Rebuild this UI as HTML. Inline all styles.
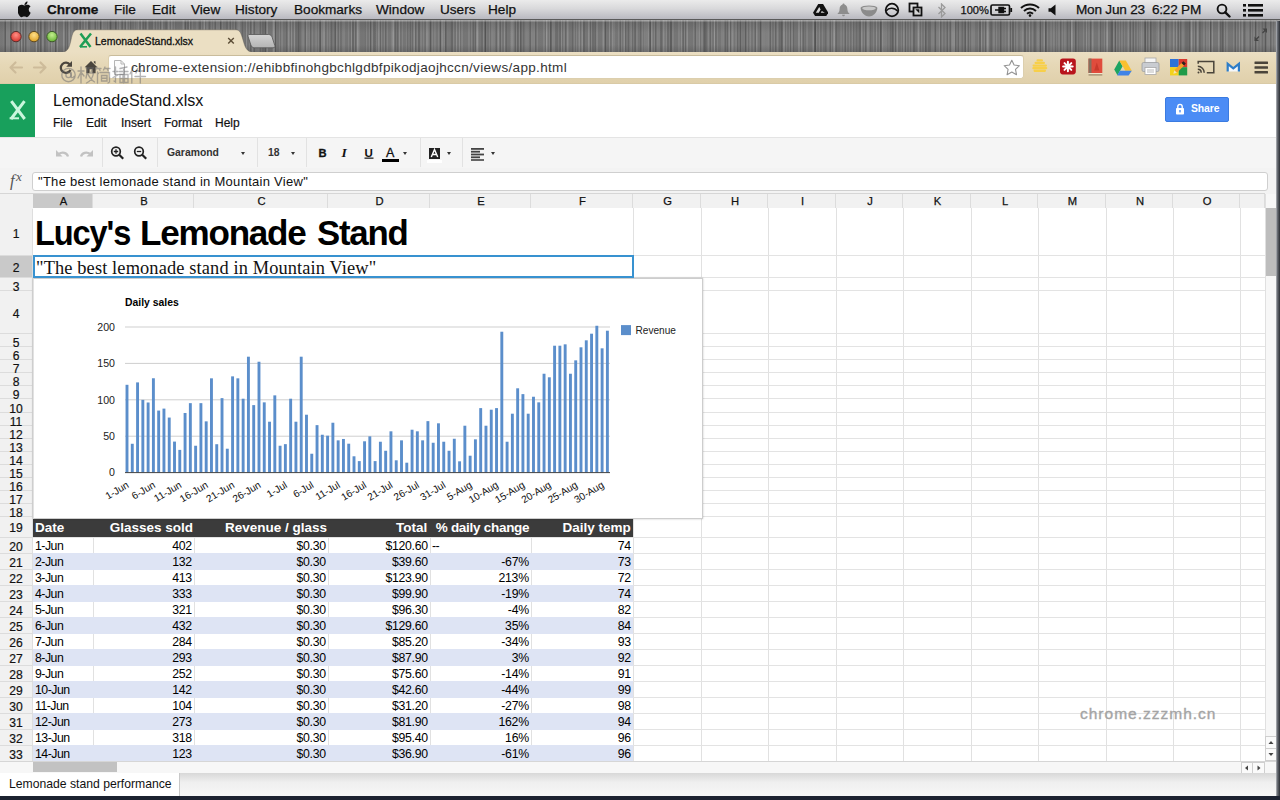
<!DOCTYPE html>
<html><head><meta charset="utf-8"><title>LemonadeStand.xlsx</title>
<style>
html,body{margin:0;padding:0}
body{width:1280px;height:800px;overflow:hidden;position:relative;background:#fff;font-family:"Liberation Sans",sans-serif;color:#000}
div,span,svg{position:absolute;box-sizing:border-box}
.tc span{position:static}
/* ---- mac menubar ---- */
#menubar{left:0;top:0;width:1280px;height:20px;background:linear-gradient(#ebebeb 0%,#d9d9db 45%,#b9b9c0 100%);border-bottom:1px solid #5a5a5a}
#menubar .m{top:0;height:20px;line-height:20px;font-size:13.6px;color:#111;white-space:nowrap;-webkit-text-stroke:0.25px #111}
#menubar .m.b{font-weight:bold}
/* ---- chrome frame ---- */
#frame{left:0;top:20px;width:1280px;height:33px;background:
repeating-linear-gradient(90deg,rgba(255,255,255,.10) 0,rgba(255,255,255,.10) 1px,transparent 1px,transparent 3px),
repeating-linear-gradient(90deg,rgba(0,0,0,.13) 0,rgba(0,0,0,.13) 1px,transparent 1px,transparent 5px),
repeating-linear-gradient(90deg,rgba(255,255,255,.09) 0,rgba(255,255,255,.09) 2px,transparent 2px,transparent 7px),
repeating-linear-gradient(90deg,rgba(0,0,0,.12) 0,rgba(0,0,0,.12) 2px,transparent 2px,transparent 11px),
repeating-linear-gradient(90deg,rgba(255,255,255,.08) 0,rgba(255,255,255,.08) 3px,transparent 3px,transparent 17px),
repeating-linear-gradient(90deg,rgba(0,0,0,.08) 0,rgba(0,0,0,.08) 6px,transparent 6px,transparent 37px),
#757575}
#frameshade{left:0;top:20px;width:1280px;height:33px;background:linear-gradient(rgba(200,200,200,.5) 0,rgba(200,200,200,.5) 1px,rgba(60,60,60,.22) 2px,rgba(120,120,120,.0) 40%,rgba(120,120,120,.0) 75%,rgba(60,60,60,.3))}
#ctoolbar{left:0;top:52px;width:1280px;height:32px;background:linear-gradient(#ebdfc3,#e6d8b7 40%,#e0d0ab);border-bottom:1px solid #d9caa6}
#omni{left:108px;top:55px;width:916px;height:24px;background:#fff;border:1px solid #dccfae;border-top-color:#c9bc9c;border-radius:3px}
#url{left:131px;top:57px;height:21px;line-height:21px;font-size:13.5px;color:#333;white-space:nowrap;letter-spacing:0.33px}
#tabtxt{left:95px;top:33px;height:16px;line-height:16px;font-size:10.5px;color:#111;white-space:nowrap;-webkit-text-stroke:0.3px #111}
/* ---- app ---- */
#logo{left:0;top:84px;width:35px;height:53px;background:#18a05c}
#doctitle{left:53px;top:90px;height:20px;line-height:20px;font-size:16.1px;color:#111;white-space:nowrap}
.am{top:115px;height:16px;line-height:16px;font-size:12px;color:#111;white-space:nowrap;-webkit-text-stroke:0.2px #111}
#share{left:1165px;top:97px;width:64px;height:25px;background:#4b8cf5;border:1px solid #3b7be0;border-radius:2px}
#share span{left:25px;top:0;height:22px;line-height:22px;font-size:10.4px;font-weight:bold;color:#fff;letter-spacing:-0.1px}
#atool{left:0;top:137px;width:1280px;height:32px;background:#f5f5f5;border-top:1px solid #e4e4e4;border-bottom:1px solid #ececec}
.sep{top:138px;width:1px;height:29px;background:#e2e2e2}
.tt{top:145px;height:16px;line-height:16px;font-size:10.4px;font-weight:bold;color:#333;white-space:nowrap}
.car{width:0;height:0;border-left:2.6px solid transparent;border-right:2.6px solid transparent;border-top:3px solid #333;top:152px;margin-left:0.5px}
#fbar{left:0;top:168px;width:1280px;height:26px;background:#f3f3f3}
#fx{left:10px;top:167.5px;font-family:"Liberation Serif",serif;font-style:italic;font-size:16.5px;color:#555;line-height:18px;height:18px;white-space:nowrap}
#finput{left:32px;top:172px;width:1236px;height:19px;background:#fff;border:1px solid #cfcfcf;border-radius:3px}
#ftext{left:38px;top:173px;height:17px;line-height:17px;font-size:13px;color:#111;white-space:nowrap;letter-spacing:0.28px}
/* ---- grid ---- */
#colhdr{left:0;top:193px;width:1265px;height:15px;background:#f1f1f1;border-top:1px solid #d6d6d6}
.ch{top:0;height:14px;line-height:14px;font-size:11.2px;text-align:center;color:#111;padding-left:2px;-webkit-text-stroke:0.25px #111;border-right:1px solid #dcdcdc}
.ch.sel{background:#c9c9c9}
#rowhdr{left:0;top:0;width:33px;height:761px}#rowbg{left:0;top:208px;width:33px;height:553px;background:#f1f1f1}
.rh{left:0;width:33px;font-size:12.1px;text-align:center;color:#111;border-bottom:1px solid #dcdcdc;border-right:1px solid #dedede;-webkit-text-stroke:0.2px #111}
.rh.sel{background:#c9c9c9}
#corner{left:0;top:193px;width:33px;height:15px;background:#f1f1f1;border:1px solid #d6d6d6;border-left:0}
.vl{top:208px;width:1px;height:553px;background:#e1e1e1}
.hl{left:33px;width:1232px;height:1px;background:#e3e3e3}
#r1mask{left:33px;top:208px;width:600px;height:47px;background:#fff}
.r1{top:208px;height:48px;line-height:49px;font-size:34.8px;font-weight:bold;white-space:nowrap;color:#000;letter-spacing:-1.22px;transform-origin:0 50%}#r1a{transform:scaleX(0.937)}#r1b{transform:scaleX(1.008)}
#r2{left:33px;top:255px;width:601px;height:23px;background:#fff;border:2px solid #3892d0}
#r2t{left:36px;top:257px;height:22px;line-height:22px;font-family:"Liberation Serif",serif;font-size:18.4px;white-space:nowrap;color:#111;letter-spacing:0.12px}
/* ---- table ---- */
.thr{left:33px;width:600px;background:#3b3b3b}
.thr .tc{top:0;height:18px;line-height:18px;font-size:13.5px;font-weight:bold;color:#fff;letter-spacing:0}.thr .tc.r{padding-right:1px}
.tr{left:33px;width:600px;height:16px}
.tr.b{background:#dee4f4;height:17px}
.tr .tc{top:0;height:16px;line-height:18px;font-size:12.3px;color:#000;letter-spacing:-0.3px}.tr .tc.l{letter-spacing:-0.5px}
.tc{white-space:nowrap;overflow:visible}
.tc.l{text-align:left;padding-left:2px}
.tc.r{text-align:right;padding-right:2.2px}
#tbl .tc{margin-left:-33px}
/* ---- chart ---- */
#chart{left:33px;top:278px;width:670px;height:241px;background:#fff;border:1px solid #cdcdcd;border-left-color:#e2e2e2;box-shadow:0 0 2px rgba(0,0,0,.22)}
/* ---- footer ---- */
#hscroll{left:0;top:761px;width:1280px;height:12px;background:#f7f7f7;border-top:1px solid #d6d6d6}
#hthumb{left:33px;top:762px;width:84px;height:10px;background:#c2c2c2}
#vscroll{left:1265px;top:194px;width:12px;height:568px;background:#f7f7f7;border-left:1px solid #e0e0e0}
#vthumb{left:1266px;top:208px;width:10px;height:68px;background:#bdbdbd}
#tabbar{left:0;top:773px;width:1280px;height:23px;background:linear-gradient(#d8d8d8,#efefef 40%,#f6f6f6)}
#sheettab{left:0;top:773px;width:180px;height:23px;background:#fff;border-right:1px solid #c8c8c8;font-size:12.2px;line-height:22px;padding-left:9px;color:#111;white-space:nowrap}
#bottom{left:0;top:796px;width:1280px;height:4px;background:#1c2230}
#rightedge{left:1276px;top:21px;width:4px;height:779px;background:linear-gradient(90deg,#b9bbc0 0,#6a6e75 35%,#2a2d33 100%)}
#wm{left:1080px;top:704px;font-size:15.5px;line-height:20px;color:#a4a4a4;-webkit-text-stroke:0.35px #a4a4a4;letter-spacing:1px;white-space:nowrap}
#wm2{left:60px;top:62px;font-size:15px;line-height:20px;color:rgba(120,110,95,.55);white-space:nowrap}

</style></head><body>
<!-- mac menubar -->
<div id="menubar">
<svg style="left:17.600px;top:1px" width="14" height="16.800" viewBox="0 0 15 18"><path d="M10.2 0.6c0.1 1-0.3 1.9-0.9 2.6C8.7 3.9 7.8 4.4 6.9 4.3 6.8 3.4 7.2 2.4 7.8 1.8 8.4 1.1 9.4 0.6 10.2 0.6zM13.6 12.6c-0.4 1-0.6 1.400-1.100 2.200-0.700 1.100-1.700 2.500-2.900 2.500-1.100 0-1.400-0.700-2.900-0.700-1.500 0-1.800 0.700-2.900 0.700C2.600 17.300 1.700 16 1 14.900-1 11.800-1.200 8.200 0 6.300 0.900 4.900 2.300 4.100 3.600 4.100c1.300 0 2.200 0.700 3.300 0.700 1.100 0 1.700-0.700 3.300-0.700 1.200 0 2.400 0.600 3.300 1.700-2.900 1.600-2.400 5.700 0.100 6.800z" fill="#111"/></svg>
<div class="m b" style="left:47px">Chrome</div>
<div class="m" style="left:114px">File</div>
<div class="m" style="left:152px">Edit</div>
<div class="m" style="left:191px">View</div>
<div class="m" style="left:235px">History</div>
<div class="m" style="left:294px">Bookmarks</div>
<div class="m" style="left:376px">Window</div>
<div class="m" style="left:440px">Users</div>
<div class="m" style="left:488px">Help</div>
<!-- right status icons -->
<svg style="left:813px;top:3.5px" width="15.3" height="12.6" viewBox="0 0 17 14"><path d="M5.800 0h5.400l5.800 9.800-2.700 4.200H2.700L0 9.800z" fill="#111"/><path d="M6.900 3.200l-3.800 6.600h3.300l2.100-3.700zM9.800 7.800l-1.200 2h4.600z" fill="#d8d8d8"/></svg>
<svg style="left:837px;top:3px" width="13" height="14" viewBox="0 0 13 14"><path d="M6.500 0.500c0.600 0 1 0.400 1 0.900 2 0.600 2.900 2.300 2.900 4.500 0 2.400 0.700 3.500 1.900 4.400v0.700H0.700v-0.700c1.200-0.900 1.900-2 1.900-4.400 0-2.200 0.900-3.900 2.900-4.500 0-0.500 0.400-0.900 1-0.900zM5 11.800h3c0 0.900-0.700 1.500-1.500 1.500S5 12.700 5 11.800z" fill="#8d8d8d"/></svg>
<svg style="left:860px;top:5px" width="18" height="12" viewBox="0 0 18 12"><path d="M0.600 2.800C1.500 1.200 5 0.400 9 0.400s7.500 0.800 8.400 2.400c-0.300 4.600-3.700 8.600-8.400 8.600S0.900 7.400 0.600 2.800z" fill="#8b8b8b"/><ellipse cx="9" cy="3.300" rx="6.800" ry="1.900" fill="#c9c9c9"/></svg>
<svg style="left:884px;top:2px" width="16" height="16" viewBox="0 0 16 16"><circle cx="8" cy="8" r="6.300" fill="none" stroke="#111" stroke-width="1.800"/><path d="M2.300 8.800c2.200-3.200 8-3.800 11.200 0.300" fill="none" stroke="#111" stroke-width="1.500"/></svg>
<svg style="left:908px;top:2px" width="15" height="15" viewBox="0 0 15 15"><rect x="1.500" y="1.500" width="8" height="8" fill="none" stroke="#111" stroke-width="1.800"/><rect x="5.500" y="5.500" width="8" height="8" fill="#d5d5d5" stroke="#111" stroke-width="1.800"/><path d="M7.300 7.300h4v4z" fill="#111"/></svg>
<svg style="left:937px;top:3px" width="10" height="15" viewBox="0 0 10 15"><path d="M1.500 4l6.500 6.500-3.500 3.500V1L8 4.500 1.500 11" fill="none" stroke="#9a9a9a" stroke-width="1.300"/></svg>
<div class="m" style="left:960.5px;font-size:11.1px">100%</div>
<svg style="left:990px;top:4px" width="23" height="12" viewBox="0 0 23 12"><rect x="1" y="1" width="18.500" height="10" rx="1.500" fill="none" stroke="#111" stroke-width="1.700"/><rect x="20.300" y="4" width="1.800" height="4" fill="#111"/><path d="M5 6h4M9 3.500h4.500v5H9zM13.500 4.500h2.500M13.500 7.500h2.500" stroke="#111" stroke-width="1.400" fill="#111"/></svg>
<svg style="left:1020px;top:3px" width="20" height="14" viewBox="0 0 20 14"><g fill="none" stroke="#111" stroke-width="2"><path d="M1 5C6 0.300 14 0.300 19 5"/><path d="M4 8c3.500-3.200 8.500-3.200 12 0"/><path d="M7 10.800c1.800-1.600 4.200-1.600 6 0"/></g><circle cx="10" cy="12.600" r="1.300" fill="#111"/></svg>
<svg style="left:1048px;top:4px" width="9" height="12" viewBox="0 0 9 12"><path d="M0.500 4.200h2.300L7.500 0.500v11L2.800 7.800H0.500z" fill="#111"/></svg>
<div class="m" style="left:1076px;letter-spacing:-0.22px">Mon Jun 23&nbsp; 6:22 PM</div>
<svg style="left:1216px;top:3px" width="15" height="15" viewBox="0 0 15 15"><circle cx="6" cy="6" r="4.400" fill="none" stroke="#111" stroke-width="1.900"/><path d="M9.300 9.300l4.200 4.200" stroke="#111" stroke-width="2.400" stroke-linecap="round"/></svg>
<svg style="left:1243px;top:4px" width="20" height="13" viewBox="0 0 20 13"><g fill="#111"><rect x="0" y="0" width="3" height="2.600"/><rect x="0" y="5" width="3" height="2.600"/><rect x="0" y="10" width="3" height="2.600"/><rect x="5" y="0" width="15" height="2.600"/><rect x="5" y="5" width="15" height="2.600"/><rect x="5" y="10" width="15" height="2.600"/></g></svg>
</div>
<!-- window frame -->
<div id="frame"></div><div id="frameshade"></div>
<svg style="left:0;top:20px" width="1280" height="34" viewBox="0 0 1280 34">
<defs>
<radialGradient id="gr" cx="50%" cy="35%" r="60%"><stop offset="0" stop-color="#ff8f86"/><stop offset="1" stop-color="#d93a33"/></radialGradient>
<radialGradient id="gy" cx="50%" cy="35%" r="60%"><stop offset="0" stop-color="#ffe08a"/><stop offset="1" stop-color="#e0a52a"/></radialGradient>
<radialGradient id="gg" cx="50%" cy="35%" r="60%"><stop offset="0" stop-color="#c4ee8f"/><stop offset="1" stop-color="#6cb83a"/></radialGradient>
<linearGradient id="gnt" x1="0" y1="0" x2="0" y2="1"><stop offset="0" stop-color="#d4d4d4"/><stop offset="1" stop-color="#b4b4b4"/></linearGradient>
</defs>
<circle cx="16" cy="16.600" r="5.200" fill="url(#gr)" stroke="#5a2f2d" stroke-width="1"/>
<circle cx="34" cy="16.600" r="5.200" fill="url(#gy)" stroke="#5f4a22" stroke-width="1"/>
<circle cx="52" cy="16.600" r="5.200" fill="url(#gg)" stroke="#3d5a2a" stroke-width="1"/>
<path d="M0 34V32H63C68 31.500 69.500 27 71 20 72.500 13 73.500 9.800 78 9.800H235.500C240 9.800 241 13 243 20 245 27 246.500 31.500 252 32H1280V34H0z" fill="#ebdfc3"/>
<path d="M63 32C68 31.500 69.500 27 71 20 72.500 13 73.500 9.800 78 9.800H235.500C240 9.800 241 13 243 20 245 27 246.500 31.500 252 32" fill="none" stroke="#5f5a52" stroke-width="0.900" opacity="0.450"/>
<path d="M249 14.500h19.500c2 0 3 1 3.700 3l2.600 8c0.500 1.500-0.200 2.300-1.800 2.300H254.500c-2 0-3-1-3.700-3l-2.600-8c-0.500-1.500 0.200-2.300 0.800-2.300z" fill="url(#gnt)" stroke="#555" stroke-width="0.800"/>
<!-- favicon X -->
<g stroke="#1e9e55" stroke-width="2.500" fill="none" stroke-linecap="butt"><path d="M80.500 13.500l10 13.500M91 13.500L80 27"/><path d="M80 26.800h7" stroke-width="1.600"/></g>
<!-- tab close -->
<path d="M228.200 17.900l5.600 5.600M233.800 17.900l-5.600 5.600" stroke="#5b4d36" stroke-width="1.400"/>
<!-- fullscreen arrows -->
<g stroke="#454545" stroke-width="1.300" fill="#454545"><path d="M1266 9.500l-3.500 3.500M1259 16.500l-3.500 3.500" fill="none"/><path d="M1267 8.500v4.500l-4.500-4.500zM1254.500 21v-4.500l4.500 4.500z" stroke="none"/></g>
</svg>
<div id="tabtxt">LemonadeStand.xlsx</div>
<div id="ctoolbar"></div>
<div id="omni"></div>
<svg style="left:0;top:52px" width="1280" height="31" viewBox="0 0 1280 31">
<!-- back / forward (disabled) -->
<g stroke="#cdbb9a" stroke-width="2.200" fill="none" stroke-linecap="round" stroke-linejoin="round"><path d="M22 15.500H10.500M15.500 10.500l-5 5 5 5"/><path d="M34 15.500h11.500M40.500 10.500l5 5-5 5"/></g>
<!-- reload -->
<g stroke="#4b463e" stroke-width="2.300" fill="none"><path d="M70 12.700A5.100 5.100 0 1 0 70.500 18"/></g><path d="M72 9v5.800h-5.800z" fill="#4b463e"/>
<!-- home -->
<path d="M91 9l6.300 6.200h-1.700v6h-3.200v-4h-2.800v4h-3.200v-6h-1.700zM93.800 9.300h1.700v3l-1.700-1.700z" fill="#4b463e"/>
<!-- page icon -->
<path d="M114.500 8.500h6.500l3.500 3.500v10.500h-10z" fill="#fbfbfb" stroke="#b5b5b5" stroke-width="1"/><path d="M121 8.500v3.500h3.500" fill="none" stroke="#b5b5b5" stroke-width="1"/>
<!-- star -->
<path d="M1011.800 8.200l2.300 4.800 5.300 0.700-3.900 3.700 1 5.300-4.700-2.600-4.700 2.600 1-5.300-3.900-3.700 5.300-0.700z" fill="#fff" stroke="#939393" stroke-width="1.100" stroke-linejoin="round"/>
<!-- ext: yellow -->
<g fill="#f7cf4a"><rect x="1036.500" y="7.200" width="6.500" height="2.300" rx="1.100"/><rect x="1034.500" y="9.800" width="10.500" height="2.300" rx="1.100"/><rect x="1032.500" y="12.400" width="14.500" height="2.300" rx="1.100"/><rect x="1032.300" y="15" width="15" height="2.300" rx="1.100"/><rect x="1033.500" y="17.600" width="12.500" height="2.300" rx="1.100"/></g>
<!-- ext: red asterisk -->
<rect x="1060" y="6.600" width="15.800" height="15.800" rx="2.800" fill="#b8141c"/><g stroke="#fff" stroke-width="2" stroke-linecap="round"><path d="M1067.900 9.700v9.600M1063.100 14.500h9.600M1064.500 11.100l6.800 6.800M1071.300 11.100l-6.800 6.800"/></g>
<!-- ext: red book -->
<path d="M1088.500 6.600h13.800v14.500h-13.800z" fill="#e04c3c"/><path d="M1088.500 6.600h3v14.500h-3z" fill="#86705e"/><path d="M1096.800 10.500l2.600 8h-5.200z" fill="#c93a2c"/><path d="M1088.500 21.100h13.800v1.300h-13.800z" fill="#f3ead0"/><path d="M1088.500 22.300h13.800v1.200h-13.800z" fill="#9a8466"/>
<!-- ext: drive -->
<path d="M1119.300 8.500l3.300 5.700-5.100 9.100-3.300-5.700z" fill="#1da462"/><path d="M1119.300 8.500h6.500l6 10.300h-6.500z" fill="#fbc02f"/><path d="M1119.900 18.800h11.900l-3.200 4.700h-11.400z" fill="#3f83e6"/>
<!-- ext: printer -->
<g><rect x="1145" y="6" width="11" height="6" fill="#f6f6f6" stroke="#a8a8a8" stroke-width="0.800"/><rect x="1142" y="10.500" width="17" height="9" rx="1.500" fill="#c9ccd1" stroke="#9a9da0" stroke-width="0.800"/><rect x="1145" y="15.500" width="11" height="7" fill="#fff" stroke="#a8a8a8" stroke-width="0.800"/><path d="M1147 18h7M1147 20h7" stroke="#a8a8a8" stroke-width="0.800"/></g>
<!-- ext: colorful -->
<g><rect x="1170" y="7" width="8.700" height="8.200" fill="#2d72d8"/><rect x="1178.700" y="7" width="8.500" height="8.200" fill="#d8392e"/><rect x="1170" y="15.200" width="8.700" height="8.200" fill="#f3d21c"/><rect x="1178.700" y="15.200" width="8.500" height="8.200" fill="#209b49"/><path d="M1174.300 18.300l7.200-7.400 2.600 2.500-7.200 7.400z" fill="#f2a32a"/><path d="M1181.500 10.900l1.900-1.700 2.400 2.400-1.700 1.800z" fill="#2a2320"/><path d="M1174.300 18.300l-1 3.500 3.600-1z" fill="#f7e3b0"/></g>
<!-- ext: cast -->
<g fill="none" stroke="#4a443a" stroke-width="1.500"><path d="M1198.200 11.800v-2.300h15.600v11.200h-7"/><path d="M1197.800 14.300c3.800 0 6.400 2.800 6.400 6.400M1197.800 17.300c2 0 3.400 1.500 3.400 3.400"/></g><circle cx="1198.500" cy="20.400" r="1" fill="#4a443a"/>
<!-- ext: M -->
<path d="M1227.700 19.500v-7.700l5.600 4.600 5.600-4.600v7.700" fill="#f4f7fa" stroke="#2d7dc8" stroke-width="2.200" stroke-linejoin="miter"/>
<!-- hamburger -->
<g fill="#4a443a"><rect x="1254.500" y="9.500" width="13.500" height="2.600" rx="0.500"/><rect x="1254.500" y="14.200" width="13.500" height="2.600" rx="0.500"/><rect x="1254.500" y="18.900" width="13.500" height="2.600" rx="0.500"/></g>
</svg>
<svg style="left:58px;top:62px" width="90" height="24" viewBox="0 0 90 24"><g fill="none" stroke="rgba(105,105,110,0.5)" stroke-width="1.35" stroke-linecap="round">
<circle cx="10.500" cy="13" r="6.700"/><circle cx="10.500" cy="13" r="2.600"/><path d="M13.100 10.400v4.200c0 1.500 2.300 1.500 3-0.300"/>
<path d="M20 9h6M23 5v16M23 10l-3 6M23 10l3 4M28 6h7l-2.500 5h3c-0.500 4-3 8-7 10M29.500 11c1.500 4 4 7 7 9M30 6l-2 10"/>
<path d="M39 5l-1.500 3M39 6.500h4M41 6.500l1 2M47 5l-1.500 3M47 6.500h5M49 6.500l1 2M39.500 10v11M39.500 10l1 1.500M42 10.500h9.500v9.500l-1.500 1M43.500 13.500h5.500v5.500h-5.500zM43.500 16.200h5.500"/>
<path d="M55 9.500h5M57.500 5v15l-1.500-1M55 15.500l5-2.500M62 6.500l7-1.500M61.500 9.500h8.500M65.700 6v15M62 12.500h3v8h-3zM66.500 12.500h3.500v8h-3.500zM62 16.500h2.500M67 16.500h2.500"/>
<path d="M75.500 5l-3.500 7M73.800 9.500v11.500M79.500 6.500l-1.500 4.500M78 9h8M77 14.500h10.500M82.300 5v16"/>
</g></svg>
<div id="url">chrome-extension://ehibbfinohgbchlgdbfpikodjaojhccn/views/app.html</div>
<!-- app header -->
<div id="logo"></div>
<svg style="left:0;top:83px" width="35" height="54" viewBox="0 0 35 54"><g stroke="#c9f6dd" stroke-width="3" fill="none"><path d="M11.300 18.200l13.400 17.800M24.500 18.200L11 36"/><path d="M9.600 35.300h9.400" stroke-width="2"/></g></svg>
<div id="doctitle">LemonadeStand.xlsx</div>
<div class="am" style="left:53px">File</div>
<div class="am" style="left:86px">Edit</div>
<div class="am" style="left:121px">Insert</div>
<div class="am" style="left:164px">Format</div>
<div class="am" style="left:215px">Help</div>
<div id="share"><svg style="left:9px;top:5px" width="10" height="12" viewBox="0 0 10 12"><rect x="1" y="5" width="8" height="6.500" rx="0.800" fill="#fff"/><path d="M2.800 5.500V3.600a2.200 2.200 0 0 1 4.400 0v1.900" fill="none" stroke="#fff" stroke-width="1.400"/><rect x="4.300" y="7" width="1.400" height="2.400" fill="#4b8cf5"/></svg><span>Share</span></div>
<!-- app toolbar -->
<div id="atool"></div>
<div class="sep" style="left:102px"></div><div class="sep" style="left:157px"></div><div class="sep" style="left:257px"></div><div class="sep" style="left:306px"></div><div class="sep" style="left:420px"></div><div class="sep" style="left:462px"></div>
<svg style="left:0;top:138px" width="520" height="30" viewBox="0 0 520 30">
<!-- undo / redo (disabled) -->
<g fill="none" stroke="#c2c2c2" stroke-width="2.300"><path d="M68 18.500c-1.200-4-5.500-5-9.500-2.500"/><path d="M81 18.500c1.200-4 5.500-5 9.500-2.500"/></g>
<path d="M56 12v6.500h6.500z" fill="#c2c2c2"/><path d="M93 12v6.500h-6.500z" fill="#c2c2c2"/>
<!-- zoom in/out -->
<g fill="none" stroke="#222" stroke-width="1.700"><circle cx="116" cy="13.500" r="4.300"/><path d="M119.200 16.700l4 4" stroke-width="2.200"/><path d="M113.800 13.500h4.400M116 11.300v4.400" stroke-width="1.300"/>
<circle cx="139" cy="13.500" r="4.300"/><path d="M142.200 16.700l4 4" stroke-width="2.200"/><path d="M136.800 13.500h4.400" stroke-width="1.300"/></g>
<!-- underline for U -->
<rect x="364.500" y="19.500" width="9" height="1.300" fill="#222"/>
<!-- A color bar -->
<rect x="382" y="21" width="17" height="3" fill="#000"/>
<!-- bg color icon -->
<rect x="429" y="10" width="11" height="11" fill="#222"/><path d="M431.300 19l3.200-7.500 3.200 7.500M432.500 16.500h4" stroke="#fff" stroke-width="1.400" fill="none"/><rect x="427" y="22" width="15" height="3" fill="#fff"/>
<!-- align icon -->
<g fill="#444"><rect x="471" y="10" width="13" height="1.800"/><rect x="471" y="12.800" width="9" height="1.800"/><rect x="471" y="15.600" width="13" height="1.800"/><rect x="471" y="18.400" width="9" height="1.800"/><rect x="471" y="21.200" width="13" height="1.600"/></g>
</svg>
<div class="tt" style="left:167px">Garamond</div><div class="car" style="left:240px"></div>
<div class="tt" style="left:268px">18</div><div class="car" style="left:290px"></div>
<div class="tt" style="left:318.500px;font-size:11.200px;color:#111;-webkit-text-stroke:0.3px #111">B</div>
<div class="tt" style="left:341.5px;font-size:13.5px;font-style:italic;color:#111;font-family:'Liberation Serif',serif">I</div>
<div class="tt" style="left:364.500px;font-size:11.500px;color:#111">U</div>
<div class="tt" style="left:386px;font-size:12.500px;font-weight:normal;color:#111;top:144.500px;-webkit-text-stroke:0.3px #111">A</div><div class="car" style="left:402.500px"></div>
<div class="car" style="left:446px"></div>
<div class="car" style="left:490px"></div>
<!-- formula bar -->
<div id="fbar"></div>
<div id="fx">f<span style="position:static;font-size:13px;vertical-align:5px;margin-left:1.5px">x</span></div>
<div id="finput"></div>
<div id="ftext">"The best lemonade stand in Mountain View"</div>
<div id="corner"></div>
<div id="colhdr">
<div class="ch sel" style="left:33px;width:60px">A</div>
<div class="ch" style="left:93px;width:101px">B</div>
<div class="ch" style="left:194px;width:134px">C</div>
<div class="ch" style="left:328px;width:102px">D</div>
<div class="ch" style="left:430px;width:101px">E</div>
<div class="ch" style="left:531px;width:102px">F</div>
<div class="ch" style="left:633px;width:68px">G</div>
<div class="ch" style="left:701px;width:67px">H</div>
<div class="ch" style="left:768px;width:68px">I</div>
<div class="ch" style="left:836px;width:67px">J</div>
<div class="ch" style="left:903px;width:68px">K</div>
<div class="ch" style="left:971px;width:67px">L</div>
<div class="ch" style="left:1038px;width:68px">M</div>
<div class="ch" style="left:1106px;width:67px">N</div>
<div class="ch" style="left:1173px;width:67px">O</div>
<div class="ch" style="left:1240px;width:25px"></div>
</div>
<div id="rowbg"></div><div id="rowhdr">
<div class="rh" style="top:209px;height:47px;line-height:51px">1</div>
<div class="rh sel" style="top:256px;height:22px;line-height:24px">2</div>
<div class="rh" style="top:278px;height:13px;line-height:19px">3</div>
<div class="rh" style="top:291px;height:43px;line-height:47px">4</div>
<div class="rh" style="top:334px;height:13px;line-height:19px">5</div>
<div class="rh" style="top:347px;height:13px;line-height:19px">6</div>
<div class="rh" style="top:360px;height:13px;line-height:19px">7</div>
<div class="rh" style="top:373px;height:13px;line-height:19px">8</div>
<div class="rh" style="top:386px;height:13px;line-height:19px">9</div>
<div class="rh" style="top:399px;height:14px;line-height:20px">10</div>
<div class="rh" style="top:413px;height:13px;line-height:19px">11</div>
<div class="rh" style="top:426px;height:13px;line-height:19px">12</div>
<div class="rh" style="top:439px;height:13px;line-height:19px">13</div>
<div class="rh" style="top:452px;height:13px;line-height:19px">14</div>
<div class="rh" style="top:465px;height:13px;line-height:19px">15</div>
<div class="rh" style="top:478px;height:13px;line-height:19px">16</div>
<div class="rh" style="top:491px;height:13px;line-height:19px">17</div>
<div class="rh" style="top:504px;height:13px;line-height:19px">18</div>
<div class="rh" style="top:517px;height:21px;line-height:23px">19</div>
<div class="rh" style="top:538px;height:16px;line-height:18px">20</div>
<div class="rh" style="top:554px;height:16px;line-height:18px">21</div>
<div class="rh" style="top:570px;height:16px;line-height:18px">22</div>
<div class="rh" style="top:586px;height:16px;line-height:18px">23</div>
<div class="rh" style="top:602px;height:16px;line-height:18px">24</div>
<div class="rh" style="top:618px;height:16px;line-height:18px">25</div>
<div class="rh" style="top:634px;height:16px;line-height:18px">26</div>
<div class="rh" style="top:650px;height:16px;line-height:18px">27</div>
<div class="rh" style="top:666px;height:16px;line-height:18px">28</div>
<div class="rh" style="top:682px;height:16px;line-height:18px">29</div>
<div class="rh" style="top:698px;height:16px;line-height:18px">30</div>
<div class="rh" style="top:714px;height:16px;line-height:18px">31</div>
<div class="rh" style="top:730px;height:16px;line-height:18px">32</div>
<div class="rh" style="top:746px;height:16px;line-height:18px">33</div>
</div>
<div id="glines">
<div class="vl" style="left:93px"></div>
<div class="vl" style="left:194px"></div>
<div class="vl" style="left:328px"></div>
<div class="vl" style="left:430px"></div>
<div class="vl" style="left:531px"></div>
<div class="vl" style="left:633px"></div>
<div class="vl" style="left:701px"></div>
<div class="vl" style="left:768px"></div>
<div class="vl" style="left:836px"></div>
<div class="vl" style="left:903px"></div>
<div class="vl" style="left:971px"></div>
<div class="vl" style="left:1038px"></div>
<div class="vl" style="left:1106px"></div>
<div class="vl" style="left:1173px"></div>
<div class="vl" style="left:1240px"></div>
<div class="hl" style="top:255px"></div>
<div class="hl" style="top:277px"></div>
<div class="hl" style="top:290px"></div>
<div class="hl" style="top:333px"></div>
<div class="hl" style="top:346px"></div>
<div class="hl" style="top:359px"></div>
<div class="hl" style="top:372px"></div>
<div class="hl" style="top:385px"></div>
<div class="hl" style="top:398px"></div>
<div class="hl" style="top:412px"></div>
<div class="hl" style="top:425px"></div>
<div class="hl" style="top:438px"></div>
<div class="hl" style="top:451px"></div>
<div class="hl" style="top:464px"></div>
<div class="hl" style="top:477px"></div>
<div class="hl" style="top:490px"></div>
<div class="hl" style="top:503px"></div>
<div class="hl" style="top:516px"></div>
<div class="hl" style="top:537px"></div>
<div class="hl" style="top:553px"></div>
<div class="hl" style="top:569px"></div>
<div class="hl" style="top:585px"></div>
<div class="hl" style="top:601px"></div>
<div class="hl" style="top:617px"></div>
<div class="hl" style="top:633px"></div>
<div class="hl" style="top:649px"></div>
<div class="hl" style="top:665px"></div>
<div class="hl" style="top:681px"></div>
<div class="hl" style="top:697px"></div>
<div class="hl" style="top:713px"></div>
<div class="hl" style="top:729px"></div>
<div class="hl" style="top:745px"></div>
<div class="hl" style="top:761px"></div>
</div>
<div id="tbl">
<div class="thr" style="top:519px;height:18px">
<div class="tc l" style="left:33px;width:60px"><span>Date</span></div>
<div class="tc r" style="left:93px;width:101px"><span>Glasses sold</span></div>
<div class="tc r" style="left:194px;width:134px"><span>Revenue / glass</span></div>
<div class="tc r" style="left:328px;width:102px;padding-right:2.7px"><span>Total</span></div>
<div class="tc r" style="left:430px;width:101px;padding-right:1.7px;letter-spacing:-0.28px"><span>% daily change</span></div>
<div class="tc r" style="left:531px;width:102px;padding-right:2.2px"><span>Daily temp</span></div>
</div>
<div class="tr" style="top:537px">
<div class="tc l" style="left:33px;width:60px"><span>1-Jun</span></div>
<div class="tc r" style="left:93px;width:101px"><span>402</span></div>
<div class="tc r" style="left:194px;width:134px"><span>$0.30</span></div>
<div class="tc r" style="left:328px;width:102px"><span>$120.60</span></div>
<div class="tc l" style="left:430px;width:101px"><span>--</span></div>
<div class="tc r" style="left:531px;width:102px"><span>74</span></div>
</div>
<div class="tr b" style="top:553px">
<div class="tc l" style="left:33px;width:60px"><span>2-Jun</span></div>
<div class="tc r" style="left:93px;width:101px"><span>132</span></div>
<div class="tc r" style="left:194px;width:134px"><span>$0.30</span></div>
<div class="tc r" style="left:328px;width:102px"><span>$39.60</span></div>
<div class="tc r" style="left:430px;width:101px"><span>-67%</span></div>
<div class="tc r" style="left:531px;width:102px"><span>73</span></div>
</div>
<div class="tr" style="top:569px">
<div class="tc l" style="left:33px;width:60px"><span>3-Jun</span></div>
<div class="tc r" style="left:93px;width:101px"><span>413</span></div>
<div class="tc r" style="left:194px;width:134px"><span>$0.30</span></div>
<div class="tc r" style="left:328px;width:102px"><span>$123.90</span></div>
<div class="tc r" style="left:430px;width:101px"><span>213%</span></div>
<div class="tc r" style="left:531px;width:102px"><span>72</span></div>
</div>
<div class="tr b" style="top:585px">
<div class="tc l" style="left:33px;width:60px"><span>4-Jun</span></div>
<div class="tc r" style="left:93px;width:101px"><span>333</span></div>
<div class="tc r" style="left:194px;width:134px"><span>$0.30</span></div>
<div class="tc r" style="left:328px;width:102px"><span>$99.90</span></div>
<div class="tc r" style="left:430px;width:101px"><span>-19%</span></div>
<div class="tc r" style="left:531px;width:102px"><span>74</span></div>
</div>
<div class="tr" style="top:601px">
<div class="tc l" style="left:33px;width:60px"><span>5-Jun</span></div>
<div class="tc r" style="left:93px;width:101px"><span>321</span></div>
<div class="tc r" style="left:194px;width:134px"><span>$0.30</span></div>
<div class="tc r" style="left:328px;width:102px"><span>$96.30</span></div>
<div class="tc r" style="left:430px;width:101px"><span>-4%</span></div>
<div class="tc r" style="left:531px;width:102px"><span>82</span></div>
</div>
<div class="tr b" style="top:617px">
<div class="tc l" style="left:33px;width:60px"><span>6-Jun</span></div>
<div class="tc r" style="left:93px;width:101px"><span>432</span></div>
<div class="tc r" style="left:194px;width:134px"><span>$0.30</span></div>
<div class="tc r" style="left:328px;width:102px"><span>$129.60</span></div>
<div class="tc r" style="left:430px;width:101px"><span>35%</span></div>
<div class="tc r" style="left:531px;width:102px"><span>84</span></div>
</div>
<div class="tr" style="top:633px">
<div class="tc l" style="left:33px;width:60px"><span>7-Jun</span></div>
<div class="tc r" style="left:93px;width:101px"><span>284</span></div>
<div class="tc r" style="left:194px;width:134px"><span>$0.30</span></div>
<div class="tc r" style="left:328px;width:102px"><span>$85.20</span></div>
<div class="tc r" style="left:430px;width:101px"><span>-34%</span></div>
<div class="tc r" style="left:531px;width:102px"><span>93</span></div>
</div>
<div class="tr b" style="top:649px">
<div class="tc l" style="left:33px;width:60px"><span>8-Jun</span></div>
<div class="tc r" style="left:93px;width:101px"><span>293</span></div>
<div class="tc r" style="left:194px;width:134px"><span>$0.30</span></div>
<div class="tc r" style="left:328px;width:102px"><span>$87.90</span></div>
<div class="tc r" style="left:430px;width:101px"><span>3%</span></div>
<div class="tc r" style="left:531px;width:102px"><span>92</span></div>
</div>
<div class="tr" style="top:665px">
<div class="tc l" style="left:33px;width:60px"><span>9-Jun</span></div>
<div class="tc r" style="left:93px;width:101px"><span>252</span></div>
<div class="tc r" style="left:194px;width:134px"><span>$0.30</span></div>
<div class="tc r" style="left:328px;width:102px"><span>$75.60</span></div>
<div class="tc r" style="left:430px;width:101px"><span>-14%</span></div>
<div class="tc r" style="left:531px;width:102px"><span>91</span></div>
</div>
<div class="tr b" style="top:681px">
<div class="tc l" style="left:33px;width:60px"><span>10-Jun</span></div>
<div class="tc r" style="left:93px;width:101px"><span>142</span></div>
<div class="tc r" style="left:194px;width:134px"><span>$0.30</span></div>
<div class="tc r" style="left:328px;width:102px"><span>$42.60</span></div>
<div class="tc r" style="left:430px;width:101px"><span>-44%</span></div>
<div class="tc r" style="left:531px;width:102px"><span>99</span></div>
</div>
<div class="tr" style="top:697px">
<div class="tc l" style="left:33px;width:60px"><span>11-Jun</span></div>
<div class="tc r" style="left:93px;width:101px"><span>104</span></div>
<div class="tc r" style="left:194px;width:134px"><span>$0.30</span></div>
<div class="tc r" style="left:328px;width:102px"><span>$31.20</span></div>
<div class="tc r" style="left:430px;width:101px"><span>-27%</span></div>
<div class="tc r" style="left:531px;width:102px"><span>98</span></div>
</div>
<div class="tr b" style="top:713px">
<div class="tc l" style="left:33px;width:60px"><span>12-Jun</span></div>
<div class="tc r" style="left:93px;width:101px"><span>273</span></div>
<div class="tc r" style="left:194px;width:134px"><span>$0.30</span></div>
<div class="tc r" style="left:328px;width:102px"><span>$81.90</span></div>
<div class="tc r" style="left:430px;width:101px"><span>162%</span></div>
<div class="tc r" style="left:531px;width:102px"><span>94</span></div>
</div>
<div class="tr" style="top:729px">
<div class="tc l" style="left:33px;width:60px"><span>13-Jun</span></div>
<div class="tc r" style="left:93px;width:101px"><span>318</span></div>
<div class="tc r" style="left:194px;width:134px"><span>$0.30</span></div>
<div class="tc r" style="left:328px;width:102px"><span>$95.40</span></div>
<div class="tc r" style="left:430px;width:101px"><span>16%</span></div>
<div class="tc r" style="left:531px;width:102px"><span>96</span></div>
</div>
<div class="tr b" style="top:745px">
<div class="tc l" style="left:33px;width:60px"><span>14-Jun</span></div>
<div class="tc r" style="left:93px;width:101px"><span>123</span></div>
<div class="tc r" style="left:194px;width:134px"><span>$0.30</span></div>
<div class="tc r" style="left:328px;width:102px"><span>$36.90</span></div>
<div class="tc r" style="left:430px;width:101px"><span>-61%</span></div>
<div class="tc r" style="left:531px;width:102px"><span>96</span></div>
</div>
</div>
<div id="chart"><svg width="670" height="241" viewBox="33 277.4 670 241" style="position:absolute;left:-1px;top:-1px">
<rect x="125" y="435.1" width="485" height="1" fill="#cfcfcf"/>
<rect x="125" y="398.7" width="485" height="1" fill="#cfcfcf"/>
<rect x="125" y="362.3" width="485" height="1" fill="#cfcfcf"/>
<rect x="125" y="325.9" width="485" height="1" fill="#cfcfcf"/>
<g fill="#5b8ecb"><rect x="125.55" y="384.20" width="2.9" height="87.80"/><rect x="130.83" y="443.17" width="2.9" height="28.83"/><rect x="136.11" y="381.80" width="2.9" height="90.20"/><rect x="141.39" y="399.27" width="2.9" height="72.73"/><rect x="146.67" y="401.89" width="2.9" height="70.11"/><rect x="151.95" y="377.65" width="2.9" height="94.35"/><rect x="157.22" y="409.97" width="2.9" height="62.03"/><rect x="162.50" y="408.01" width="2.9" height="63.99"/><rect x="167.78" y="416.96" width="2.9" height="55.04"/><rect x="173.06" y="440.99" width="2.9" height="31.01"/><rect x="178.34" y="449.29" width="2.9" height="22.71"/><rect x="183.62" y="412.38" width="2.9" height="59.62"/><rect x="188.90" y="402.55" width="2.9" height="69.45"/><rect x="194.18" y="445.14" width="2.9" height="26.86"/><rect x="199.46" y="402.55" width="2.9" height="69.45"/><rect x="204.74" y="420.75" width="2.9" height="51.25"/><rect x="210.01" y="377.72" width="2.9" height="94.28"/><rect x="215.29" y="443.61" width="2.9" height="28.39"/><rect x="220.57" y="397.53" width="2.9" height="74.47"/><rect x="225.85" y="448.12" width="2.9" height="23.88"/><rect x="231.13" y="375.76" width="2.9" height="96.24"/><rect x="236.41" y="377.72" width="2.9" height="94.28"/><rect x="241.69" y="398.11" width="2.9" height="73.89"/><rect x="246.97" y="356.10" width="2.9" height="115.90"/><rect x="252.25" y="404.51" width="2.9" height="67.49"/><rect x="257.53" y="361.13" width="2.9" height="110.87"/><rect x="262.80" y="401.75" width="2.9" height="70.25"/><rect x="268.08" y="421.11" width="2.9" height="50.89"/><rect x="273.36" y="394.76" width="2.9" height="77.24"/><rect x="278.64" y="445.14" width="2.9" height="26.86"/><rect x="283.92" y="443.54" width="2.9" height="28.46"/><rect x="289.20" y="398.11" width="2.9" height="73.89"/><rect x="294.48" y="421.11" width="2.9" height="50.89"/><rect x="299.76" y="356.10" width="2.9" height="115.90"/><rect x="305.04" y="414.12" width="2.9" height="57.88"/><rect x="310.31" y="453.14" width="2.9" height="18.86"/><rect x="315.59" y="424.53" width="2.9" height="47.47"/><rect x="320.87" y="434.14" width="2.9" height="37.86"/><rect x="326.15" y="435.09" width="2.9" height="36.91"/><rect x="331.43" y="422.13" width="2.9" height="49.87"/><rect x="336.71" y="439.75" width="2.9" height="32.25"/><rect x="341.99" y="438.37" width="2.9" height="33.63"/><rect x="347.27" y="443.10" width="2.9" height="28.90"/><rect x="352.55" y="455.69" width="2.9" height="16.31"/><rect x="357.83" y="460.50" width="2.9" height="11.50"/><rect x="363.11" y="440.70" width="2.9" height="31.30"/><rect x="368.38" y="435.75" width="2.9" height="36.25"/><rect x="373.66" y="460.50" width="2.9" height="11.50"/><rect x="378.94" y="441.13" width="2.9" height="30.87"/><rect x="384.22" y="450.16" width="2.9" height="21.84"/><rect x="389.50" y="430.72" width="2.9" height="41.28"/><rect x="394.78" y="459.70" width="2.9" height="12.30"/><rect x="400.06" y="439.75" width="2.9" height="32.25"/><rect x="405.34" y="462.10" width="2.9" height="9.90"/><rect x="410.62" y="429.12" width="2.9" height="42.88"/><rect x="415.89" y="430.72" width="2.9" height="41.28"/><rect x="421.17" y="439.75" width="2.9" height="32.25"/><rect x="426.45" y="420.53" width="2.9" height="51.47"/><rect x="431.73" y="442.15" width="2.9" height="29.85"/><rect x="437.01" y="422.71" width="2.9" height="49.29"/><rect x="442.29" y="441.13" width="2.9" height="30.87"/><rect x="447.57" y="450.16" width="2.9" height="21.84"/><rect x="452.85" y="438.15" width="2.9" height="33.85"/><rect x="458.13" y="460.72" width="2.9" height="11.28"/><rect x="463.41" y="425.12" width="2.9" height="46.88"/><rect x="468.69" y="455.11" width="2.9" height="16.89"/><rect x="473.96" y="438.73" width="2.9" height="33.27"/><rect x="479.24" y="407.50" width="2.9" height="64.50"/><rect x="484.52" y="425.12" width="2.9" height="46.88"/><rect x="489.80" y="409.10" width="2.9" height="62.90"/><rect x="495.08" y="407.50" width="2.9" height="64.50"/><rect x="500.36" y="331.13" width="2.9" height="140.87"/><rect x="505.64" y="441.13" width="2.9" height="30.87"/><rect x="510.92" y="413.10" width="2.9" height="58.90"/><rect x="516.20" y="387.70" width="2.9" height="84.30"/><rect x="521.47" y="393.52" width="2.9" height="78.48"/><rect x="526.75" y="413.10" width="2.9" height="58.90"/><rect x="532.03" y="396.14" width="2.9" height="75.86"/><rect x="537.31" y="401.75" width="2.9" height="70.25"/><rect x="542.59" y="373.14" width="2.9" height="98.86"/><rect x="547.87" y="376.70" width="2.9" height="95.30"/><rect x="553.15" y="345.11" width="2.9" height="126.89"/><rect x="558.43" y="345.11" width="2.9" height="126.89"/><rect x="563.71" y="343.73" width="2.9" height="128.27"/><rect x="568.99" y="373.14" width="2.9" height="98.86"/><rect x="574.26" y="359.74" width="2.9" height="112.26"/><rect x="579.54" y="346.71" width="2.9" height="125.29"/><rect x="584.82" y="339.72" width="2.9" height="132.28"/><rect x="590.10" y="333.10" width="2.9" height="138.90"/><rect x="595.38" y="325.16" width="2.9" height="146.84"/><rect x="600.66" y="347.73" width="2.9" height="124.27"/><rect x="605.94" y="330.11" width="2.9" height="141.89"/></g>
<rect x="125" y="471.5" width="485" height="1" fill="#444"/>
<g font-family="Liberation Sans, sans-serif" font-size="10.6" fill="#222">
<text x="115" y="475.8" text-anchor="end">0</text>
<text x="115" y="439.4" text-anchor="end">50</text>
<text x="115" y="403.0" text-anchor="end">100</text>
<text x="115" y="366.6" text-anchor="end">150</text>
<text x="115" y="330.2" text-anchor="end">200</text>
<text transform="translate(126.0,480.2) rotate(-31)" text-anchor="end" x="0" y="7" font-size="10.1" fill="#111">1-Jun</text>
<text transform="translate(152.4,480.2) rotate(-31)" text-anchor="end" x="0" y="7" font-size="10.1" fill="#111">6-Jun</text>
<text transform="translate(178.8,480.2) rotate(-31)" text-anchor="end" x="0" y="7" font-size="10.1" fill="#111">11-Jun</text>
<text transform="translate(205.2,480.2) rotate(-31)" text-anchor="end" x="0" y="7" font-size="10.1" fill="#111">16-Jun</text>
<text transform="translate(231.6,480.2) rotate(-31)" text-anchor="end" x="0" y="7" font-size="10.1" fill="#111">21-Jun</text>
<text transform="translate(258.0,480.2) rotate(-31)" text-anchor="end" x="0" y="7" font-size="10.1" fill="#111">26-Jun</text>
<text transform="translate(284.4,480.2) rotate(-31)" text-anchor="end" x="0" y="7" font-size="10.1" fill="#111">1-Jul</text>
<text transform="translate(310.8,480.2) rotate(-31)" text-anchor="end" x="0" y="7" font-size="10.1" fill="#111">6-Jul</text>
<text transform="translate(337.2,480.2) rotate(-31)" text-anchor="end" x="0" y="7" font-size="10.1" fill="#111">11-Jul</text>
<text transform="translate(363.6,480.2) rotate(-31)" text-anchor="end" x="0" y="7" font-size="10.1" fill="#111">16-Jul</text>
<text transform="translate(389.9,480.2) rotate(-31)" text-anchor="end" x="0" y="7" font-size="10.1" fill="#111">21-Jul</text>
<text transform="translate(416.3,480.2) rotate(-31)" text-anchor="end" x="0" y="7" font-size="10.1" fill="#111">26-Jul</text>
<text transform="translate(442.7,480.2) rotate(-31)" text-anchor="end" x="0" y="7" font-size="10.1" fill="#111">31-Jul</text>
<text transform="translate(469.1,480.2) rotate(-31)" text-anchor="end" x="0" y="7" font-size="10.1" fill="#111">5-Aug</text>
<text transform="translate(495.5,480.2) rotate(-31)" text-anchor="end" x="0" y="7" font-size="10.1" fill="#111">10-Aug</text>
<text transform="translate(521.9,480.2) rotate(-31)" text-anchor="end" x="0" y="7" font-size="10.1" fill="#111">15-Aug</text>
<text transform="translate(548.3,480.2) rotate(-31)" text-anchor="end" x="0" y="7" font-size="10.1" fill="#111">20-Aug</text>
<text transform="translate(574.7,480.2) rotate(-31)" text-anchor="end" x="0" y="7" font-size="10.1" fill="#111">25-Aug</text>
<text transform="translate(601.1,480.2) rotate(-31)" text-anchor="end" x="0" y="7" font-size="10.1" fill="#111">30-Aug</text>
<text x="635.5" y="333.6" font-size="10.1">Revenue</text>
<text x="125" y="305.8" font-weight="bold" fill="#000" font-size="10.4">Daily sales</text>
</g>
<rect x="621" y="324.5" width="10" height="10" fill="#5b8ecb"/>
</svg></div>
<!-- row1/row2 content -->
<div id="r1mask"></div>
<div class="r1" id="r1a" style="left:35px">Lucy's</div><div class="r1" id="r1b" style="left:140.3px">Lemonade</div><div class="r1" id="r1c" style="left:317px">Stand</div>
<div id="r2"></div>
<div id="r2t">"The best lemonade stand in Mountain View"</div>
<!-- scrollbars / footer -->
<div id="vscroll"></div><div id="vthumb"></div>
<div id="hscroll"></div><div id="hthumb"></div>
<svg style="left:1240px;top:736px" width="40" height="38" viewBox="0 0 40 38">
<rect x="25.500" y="0.500" width="11" height="12" fill="#fafafa" stroke="#cfcfcf"/><rect x="25.500" y="12.500" width="11" height="12" fill="#fafafa" stroke="#cfcfcf"/>
<path d="M28.500 8l2.500-3 2.500 3z" fill="#444"/><path d="M28.500 17l2.500 3 2.500-3z" fill="#444"/>
<rect x="1.500" y="26.500" width="11" height="11" fill="#fafafa" stroke="#cfcfcf"/><rect x="12.500" y="26.500" width="12" height="11" fill="#fafafa" stroke="#cfcfcf"/>
<path d="M8 29.500l-3 2.500 3 2.500z" fill="#444"/><path d="M17.500 29.500l3 2.500-3 2.500z" fill="#444"/>
</svg>
<div id="tabbar"></div>
<div id="sheettab">Lemonade stand performance</div>
<div id="rightedge"></div>
<div id="bottom"></div>
<div id="wm">chrome.zzzmh.cn</div>
</body></html>
